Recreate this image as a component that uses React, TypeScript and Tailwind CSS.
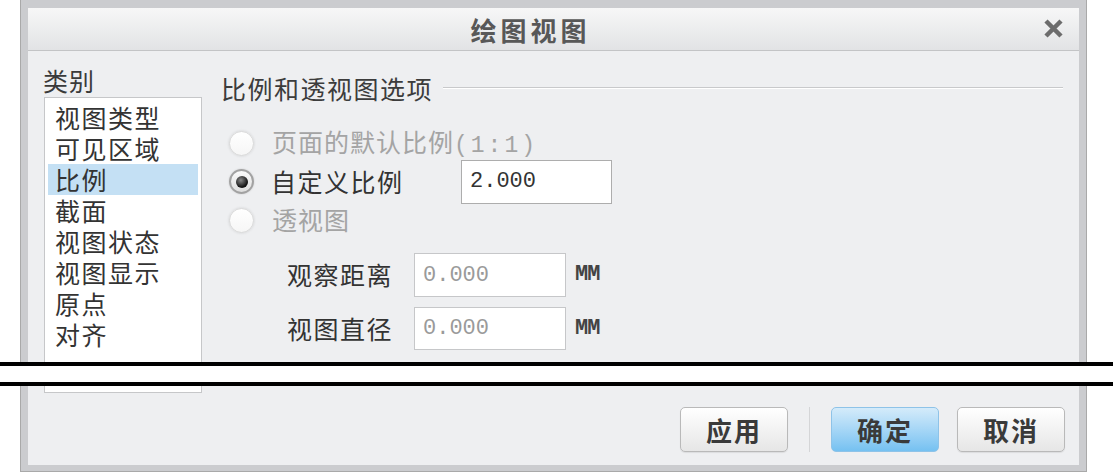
import React from "react";

const cjk = "font-['Noto_Sans_CJK_SC',sans-serif]";

function Radio({ checked, disabled }: { checked?: boolean; disabled?: boolean }) {
  if (checked) {
    return (
      <div className="w-[25px] h-[25px] rounded-full border-2 border-[#a2a2a2] bg-linear-to-b from-[#fbfbfb] to-[#dedede] flex items-center justify-center shrink-0 shadow-[0_0_2px_rgba(0,0,0,0.15)]">
        <div className="w-[12px] h-[12px] rounded-full bg-[radial-gradient(circle_at_40%_35%,#8a8a8a,#151515_65%)]" />
      </div>
    );
  }
  return (
    <div
      className={
        "w-[25px] h-[25px] rounded-full border bg-linear-to-b from-[#ffffff] to-[#f6f6f6] shrink-0 shadow-[0_0_3px_rgba(0,0,0,0.12)] " +
        (disabled ? "border-[#d9d9d9]" : "border-[#a8a8a8]")
      }
    />
  );
}

function Btn({ label, primary }: { label: string; primary?: boolean }) {
  return (
    <div
      className={
        "w-[108px] h-[45px] rounded-[5px] border flex items-center justify-center text-[26px] font-bold tracking-[2px] text-[#3a3a3a] " +
        (primary
          ? "border-[#8ec3e8] bg-linear-to-b from-[#d4ebfa] to-[#75c1f1]"
          : "border-[#b9b9b9] bg-linear-to-b from-[#ffffff] to-[#e6e6e6] shadow-[0_1px_1px_rgba(0,0,0,0.08)]")
      }
    >
      {label}
    </div>
  );
}

function Unit() {
  return (
    <span className="ml-[9px] font-['Liberation_Mono',monospace] font-bold text-[22px] tracking-[-1px] text-[#444] leading-none">
      MM
    </span>
  );
}

export default function App() {
  const items = ["视图类型", "可见区域", "比例", "截面", "视图状态", "视图显示", "原点", "对齐"];
  return (
    <div className={"relative w-[1113px] h-[473px] bg-white " + cjk}>
      <div className="ml-[20px] w-[1067px] h-[472px] border border-t-0 border-[#a9a9a9] bg-[#cbcccf] px-[7px] pt-[8px] pb-[6px] flex flex-col">
        {/* title bar */}
        <div className="h-[43px] shrink-0 bg-linear-to-b from-[#f7f7f7] to-[#e2e3e5] border-b border-[#c3c4c6] flex items-center relative">
          <div className="flex-1 flex justify-center pr-[46px] text-[26px] font-bold tracking-[4px] text-[#585858]">
            绘图视图
          </div>
          <svg className="absolute left-[1016px] top-[11px]" width="19" height="19" viewBox="0 0 19 19">
            <path d="M2 2 L17 17 M17 2 L2 17" stroke="#6c6c6c" strokeWidth="4.5" strokeLinecap="butt" />
          </svg>
        </div>
        {/* content */}
        <div className="flex-1 bg-[#eeeff1] flex flex-col">
          <div className="h-[344px] flex">
            {/* left column */}
            <div className="pl-[16px] pt-[15px] w-[174px] shrink-0 flex flex-col">
              <div className="h-[28px] leading-[28px] text-[25px] tracking-[1px] text-[#3a3a3a] -ml-[1px]">类别</div>
              <div className="mt-[3px] h-[296px] bg-white border border-[#c6c7c9] px-[3px] pt-[4px]">
                {items.map((t) => (
                  <div
                    key={t}
                    className={
                      "h-[31px] leading-[31px] pl-[7px] text-[25px] tracking-[1.5px] text-[#333] " +
                      (t === "比例" ? "bg-[#c4e0f4]" : "")
                    }
                  >
                    {t}
                  </div>
                ))}
              </div>
            </div>
            {/* right column */}
            <div className="flex-1 pl-[19px] pr-[16px] pt-[24px] flex flex-col">
              <div className="h-[26px] flex items-center">
                <span className="text-[25px] tracking-[1.5px] text-[#3c3c3c] leading-[26px]">比例和透视图选项</span>
                <div className="flex-1 h-[2px] ml-[10px] border-t border-[#c8c9cb] border-b border-b-white" />
              </div>
              <div className="mt-[23px] h-[38px] flex items-center pl-[8px]">
                <Radio disabled />
                <span className="ml-[18px] text-[25px] tracking-[1px] text-[#a4a4a4]">
                  页面的默认比例
                  <span className="font-['Liberation_Mono',monospace] text-[23px] tracking-[3px]">(1:1)</span>
                </span>
              </div>
              <div className="h-[39px] flex items-center pl-[8px]">
                <Radio checked />
                <span className="ml-[17px] w-[190px] text-[25px] tracking-[1.5px] text-[#333]">自定义比例</span>
                <div className="w-[151px] h-[44px] shrink-0 bg-white border border-[#adadad] flex items-center pl-[8px] font-['Liberation_Mono',monospace] text-[22px] text-[#333]">
                  2.000
                </div>
              </div>
              <div className="h-[38px] flex items-center pl-[8px]">
                <Radio disabled />
                <span className="ml-[18px] text-[25px] tracking-[1px] text-[#a4a4a4]">透视图</span>
              </div>
              <div className="mt-[14px] h-[44px] flex items-center pl-[66px]">
                <span className="w-[127px] text-[25px] tracking-[1.5px] text-[#333]">观察距离</span>
                <div className="w-[152px] h-[44px] shrink-0 bg-white border border-[#c6c7c9] flex items-center pl-[8px] font-['Liberation_Mono',monospace] text-[22px] text-[#9a9a9a]">
                  0.000
                </div>
                <Unit />
              </div>
              <div className="mt-[10px] h-[43px] flex items-center pl-[66px]">
                <span className="w-[127px] text-[25px] tracking-[1.5px] text-[#333]">视图直径</span>
                <div className="w-[152px] h-[43px] shrink-0 bg-white border border-[#c6c7c9] flex items-center pl-[8px] font-['Liberation_Mono',monospace] text-[22px] text-[#9a9a9a]">
                  0.000
                </div>
                <Unit />
              </div>
            </div>
          </div>
          {/* footer */}
          <div className="flex-1 flex items-center justify-end pr-[14px] pb-[2px]">
            <Btn label="应用" />
            <div className="w-px h-[45px] bg-[#d4d5d7] mx-[21px]" />
            <Btn label="确定" primary />
            <div className="w-[18px]" />
            <Btn label="取消" />
          </div>
        </div>
      </div>
      {/* break marks */}
      <div className="absolute left-0 top-[362px] w-full h-[24px] bg-white border-y-4 border-black" />
    </div>
  );
}
